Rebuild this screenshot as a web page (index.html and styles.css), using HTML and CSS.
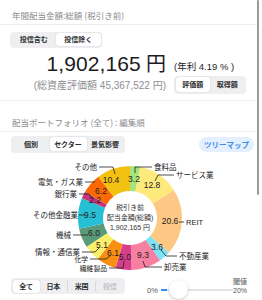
FILE: index.html
```html
<!DOCTYPE html>
<html lang="ja">
<head>
<meta charset="utf-8">
<link rel="stylesheet" href="styles.css">
</head>
<body>
<div class="page">
  <div class="title">年間配当金額:総額 (税引き前)</div>
  <section class="summary">
    <div class="seg seg-fund">
      <span class="seg-item">投信含む</span>
      <span class="seg-item on">投信除く</span>
    </div>
    <div class="amount-grid">
      <div class="amount">1,902,165<span class="yen">円</span></div>
      <div class="yield">(年利 4.19 % )</div>
      <div class="assets">(総資産評価額 45,367,522 円)</div>
      <div class="seg seg-basis">
        <span class="seg-item on">評価額</span>
        <span class="seg-item">取得額</span>
      </div>
    </div>
  </section>
  <div class="section-title">配当ポートフォリオ (全て) : 編集順</div>
  <div class="controls">
    <div class="seg seg-view">
      <span class="seg-item">個別</span>
      <span class="seg-item on">セクター</span>
      <span class="seg-item">景気影響</span>
    </div>
    <span class="pill">ツリーマップ</span>
  </div>
  <svg class="chart" width="262" height="125" viewBox="0 148 262 125">
    <g class="ring" fill="none" stroke-width="25" transform="rotate(-90 130 214)">
      <circle cx="130" cy="214" r="39.5" pathLength="100" stroke="#a6e57b" stroke-dasharray="3.2 96.8" stroke-dashoffset="0"/>
      <circle cx="130" cy="214" r="39.5" pathLength="100" stroke="#fde97c" stroke-dasharray="12.8 87.2" stroke-dashoffset="-3.2"/>
      <circle cx="130" cy="214" r="39.5" pathLength="100" stroke="#fdc883" stroke-dasharray="20.6 79.4" stroke-dashoffset="-16"/>
      <circle cx="130" cy="214" r="39.5" pathLength="100" stroke="#7fe3f6" stroke-dasharray="3.6 96.4" stroke-dashoffset="-36.6"/>
      <circle cx="130" cy="214" r="39.5" pathLength="100" stroke="#f77fa0" stroke-dasharray="9.3 90.7" stroke-dashoffset="-40.2"/>
      <circle cx="130" cy="214" r="39.5" pathLength="100" stroke="#d63e8a" stroke-dasharray="5 95" stroke-dashoffset="-49.5"/>
      <circle cx="130" cy="214" r="39.5" pathLength="100" stroke="#f98f12" stroke-dasharray="6.1 93.9" stroke-dashoffset="-54.5"/>
      <circle cx="130" cy="214" r="39.5" pathLength="100" stroke="#fbef6b" stroke-dasharray="5.1 94.9" stroke-dashoffset="-60.6"/>
      <circle cx="130" cy="214" r="39.5" pathLength="100" stroke="#5b9a79" stroke-dasharray="6 94" stroke-dashoffset="-65.7"/>
      <circle cx="130" cy="214" r="39.5" pathLength="100" stroke="#27bfd3" stroke-dasharray="9.5 90.5" stroke-dashoffset="-71.7"/>
      <circle cx="130" cy="214" r="39.5" pathLength="100" stroke="#c6347b" stroke-dasharray="2.2 97.8" stroke-dashoffset="-81.2"/>
      <circle cx="130" cy="214" r="39.5" pathLength="100" stroke="#fb6904" stroke-dasharray="6.2 93.8" stroke-dashoffset="-83.4"/>
      <circle cx="130" cy="214" r="39.5" pathLength="100" stroke="#f3c111" stroke-dasharray="10.4 89.6" stroke-dashoffset="-89.6"/>
    </g>
    <g class="leaders" fill="none" stroke="#222" stroke-width="0.8">
      <polyline points="99,163 113,163 115,170"/>
      <polyline points="85,178 95,178"/>
      <polyline points="79,190 89,190 93,195"/>
      <polyline points="79,211 85,211"/>
      <polyline points="73,231 88,231"/>
      <polyline points="82,248 95,248 99,244"/>
      <polyline points="90,255 106,255 110,252"/>
      <polyline points="109,264 123,264 124,257"/>
      <polyline points="152,163 135,163 135,169"/>
      <polyline points="174,171 158,171 155,177"/>
      <polyline points="179,218 184,218"/>
      <polyline points="177,252 166,252 161,246"/>
      <polyline points="162,263 145,263 143,257"/>
    </g>
    <g class="values">
      <text x="134" y="175">3.2</text>
      <text x="152" y="181">12.8</text>
      <text x="170" y="217">20.6</text>
      <text x="157" y="243">3.6</text>
      <text x="143" y="251">9.3</text>
      <text x="125" y="253">5.0</text>
      <text x="113" y="249">6.1</text>
      <text x="102" y="241">5.1</text>
      <text x="94" y="229">6.0</text>
      <text x="90" y="211">9.5</text>
      <text x="95" y="196">2.2</text>
      <text x="101" y="187">6.2</text>
      <text x="111" y="176">10.4</text>
    </g>
    <g class="labels-l">
      <text x="97" y="163">その他</text>
      <text x="83" y="178">電気・ガス業</text>
      <text x="77" y="190">銀行業</text>
      <text x="78" y="211">その他金融業</text>
      <text x="71" y="231">機械</text>
      <text x="80" y="248">情報・通信業</text>
      <text class="tight" x="88" y="255">化学</text>
      <text class="tight" x="107" y="264">繊維製品</text>
    </g>
    <g class="labels-r">
      <text x="154" y="163">食料品</text>
      <text x="176" y="171">サービス業</text>
      <text x="186" y="218">REIT</text>
      <text x="179" y="252">不動産業</text>
      <text x="164" y="263">卸売業</text>
    </g>
    <g class="center">
      <text x="130" y="203">税引き前</text>
      <text x="130" y="213">配当金額(総額)</text>
      <text x="130" y="223">1,902,165 円</text>
    </g>
  </svg>
  <div class="bottom">
    <div class="seg seg-region">
      <span class="seg-item on">全て</span>
      <span class="seg-item">日本</span>
      <span class="seg-item sep">米国</span>
      <span class="seg-item off sep">投信</span>
    </div>
    <div class="slider">
      <span class="pct">0%</span>
      <div class="track">
        <span class="fill"></span>
        <span class="thumb"></span>
      </div>
      <div class="limit">
        <span>閾値</span>
        <span>20%</span>
      </div>
    </div>
  </div>
</div>
<div class="scrollbar"></div>
</body>
</html>
```
FILE: styles.css
```css
* { box-sizing: border-box; }
html, body {
  margin: 0;
  padding: 0;
  background: #fff;
}
body {
  width: 262px;
  height: 300px;
  overflow: hidden;
  position: relative;
  font-family: "Liberation Sans", "Noto Sans CJK JP", sans-serif;
  color: #1c1c1e;
}
.page {
  width: 258px;
}
.title {
  padding: 10px 12px 4px;
  font-size: 8.5px;
  line-height: 10px;
  height: 25px;
  color: #8a8a8e;
  border-bottom: 1px solid #ececee;
  font-family: "Noto Sans CJK JP", sans-serif;
}
.summary {
  padding: 3px 0 6px;
  border-bottom: 1px solid #ececee;
}
.seg {
  display: inline-flex;
  background: #efeff1;
  border-radius: 4px;
  padding: 1.5px;
  font-family: "Noto Sans CJK JP", sans-serif;
}
.seg-item {
  display: block;
  text-align: center;
  font-size: 7px;
  font-weight: 700;
  line-height: 13px;
  color: #2c2c2e;
  border-radius: 3px;
}
.seg-item.on {
  background: #fff;
  box-shadow: 0 0 1.5px rgba(0, 0, 0, 0.18);
}
.seg-item.off { color: #c4c4c8; }
.seg-item.sep { border-left: 1px solid #d8d8dc; }
.seg-fund {
  margin-left: 10px;
  width: 92px;
  height: 16px;
}
.seg-fund .seg-item { flex: 1; }
.amount-grid {
  display: grid;
  grid-template-columns: 166px 1fr;
  margin-top: 3px;
}
.amount {
  text-align: right;
  font-size: 21px;
  line-height: 24px;
  font-weight: 400;
  letter-spacing: 0.1px;
}
.yen {
  font-family: "Noto Sans CJK JP", sans-serif;
  font-size: 20px;
  margin-left: 5px;
}
.yield {
  align-self: end;
  padding-left: 8px;
  padding-bottom: 3px;
  font-size: 9.5px;
  line-height: 12px;
  font-family: "Liberation Sans", "Noto Sans CJK JP", sans-serif;
}
.assets {
  text-align: right;
  align-self: center;
  font-size: 10px;
  line-height: 12px;
  color: #8e8e93;
  padding-top: 2px;
}
.seg-basis {
  margin-left: 8px;
  width: 72px;
  height: 18px;
  align-self: center;
}
.seg-basis .seg-item { flex: 1; line-height: 15px; }
.section-title {
  padding: 16px 12px 4px;
  height: 31px;
  font-size: 8.5px;
  line-height: 10px;
  color: #8a8a8e;
  border-bottom: 1px solid #ececee;
  font-family: "Noto Sans CJK JP", sans-serif;
}
.controls {
  display: flex;
  align-items: center;
  justify-content: space-between;
  padding: 4px 4px 0 11px;
}
.seg-view {
  width: 114px;
  height: 17px;
}
.seg-view .seg-item { flex: 1; line-height: 14px; }
.pill {
  display: block;
  width: 55px;
  height: 15px;
  line-height: 15px;
  text-align: center;
  border-radius: 8px;
  background: #e4f0fd;
  color: #3b8ded;
  font-size: 7.5px;
  font-weight: 700;
  font-family: "Noto Sans CJK JP", sans-serif;
}
.chart {
  display: block;
  margin-top: -1px;
}
.chart text {
  font-family: "Liberation Sans", "Noto Sans CJK JP", sans-serif;
  dominant-baseline: central;
  fill: #1c1c1e;
}
.values text {
  font-size: 8.5px;
  text-anchor: middle;
}
.labels-l text, .labels-r text {
  font-size: 7.5px;
}
.labels-l text.tight { font-size: 6.8px; }
.labels-l text { text-anchor: end; }
.labels-r text { text-anchor: start; }
.center text {
  font-size: 7px;
  text-anchor: middle;
  fill: #333;
}
.bottom {
  display: flex;
  align-items: center;
  padding: 2px 0 7px 11px;
  border-bottom: 1px solid #ececee;
  height: 25px;
}
.seg-region {
  width: 114px;
  height: 16px;
}
.seg-region .seg-item { flex: 1; }
.slider {
  display: flex;
  align-items: center;
  margin-left: 22px;
  margin-top: 8px;
}
.pct {
  font-size: 7.5px;
  color: #555;
  width: 14px;
}
.track {
  position: relative;
  width: 72px;
  height: 1.5px;
  background: #e3e3e6;
}
.fill {
  position: absolute;
  left: 0;
  top: 0;
  width: 6px;
  height: 1.5px;
  background: #3b8ded;
}
.thumb {
  position: absolute;
  left: 8px;
  top: -9px;
  width: 19px;
  height: 19px;
  border-radius: 50%;
  background: #fff;
  box-shadow: 0 1px 3px rgba(0, 0, 0, 0.22);
}
.limit {
  display: flex;
  flex-direction: column;
  align-items: center;
  font-size: 7px;
  line-height: 10px;
  color: #555;
  margin-top: -8px;
  margin-left: 0;
}
.limit span:first-child { font-family: "Noto Sans CJK JP", sans-serif; }
.scrollbar {
  position: absolute;
  left: 257px;
  top: 0;
  width: 1.5px;
  height: 195px;
  background: #9c9c9f;
  border-radius: 1px;
}
```
